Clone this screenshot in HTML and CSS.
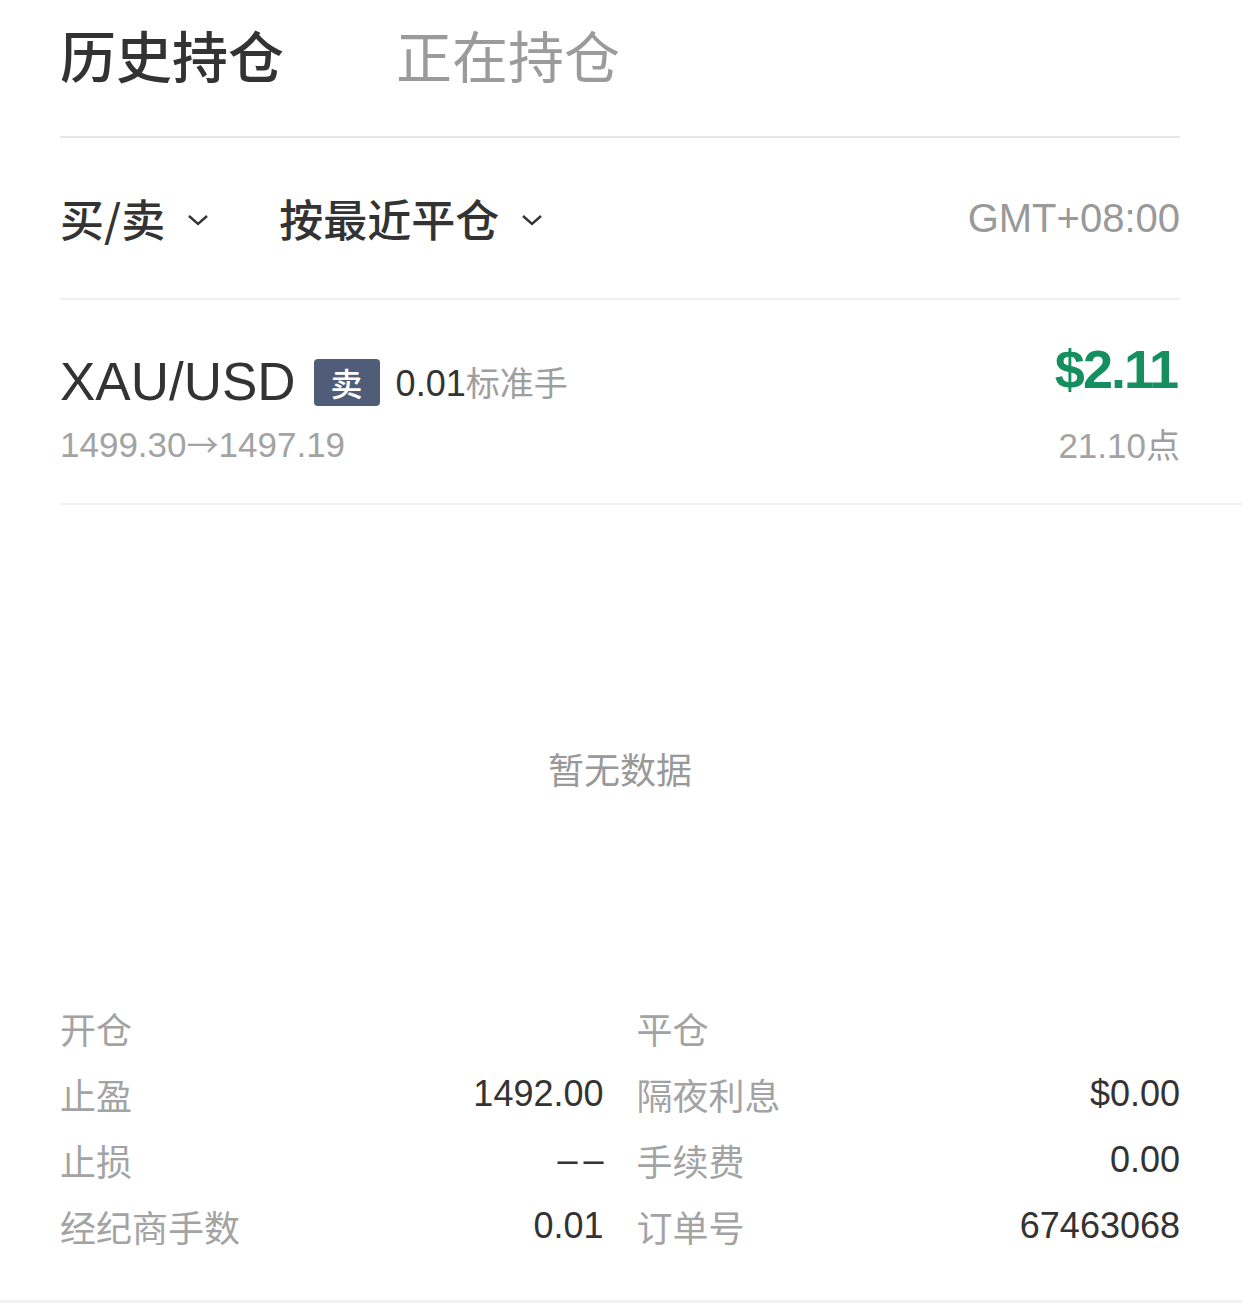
FILE: index.html
```html
<!DOCTYPE html>
<html lang="zh-CN">
<head>
    <meta charset="UTF-8">
    <meta name="viewport" content="width=device-width, initial-scale=1.0">
    <title>历史持仓</title>
    <link rel="stylesheet" href="styles.css">
</head>
<body>
    <div class="page">
        <div class="tabs">
            <div class="tab active">历史持仓</div>
            <div class="tab">正在持仓</div>
        </div>

        <div class="filters">
            <div class="filter">买/卖
                <svg class="chevron" viewBox="0 0 22 12"><polyline points="2,2 11,10 20,2"></polyline></svg>
            </div>
            <div class="filter">按最近平仓
                <svg class="chevron" viewBox="0 0 22 12"><polyline points="2,2 11,10 20,2"></polyline></svg>
            </div>
            <div class="timezone">GMT+08:00</div>
        </div>

        <div class="trade">
            <div class="trade-line">
                <div class="trade-left">
                    <span class="symbol">XAU/USD</span>
                    <span class="badge">卖</span>
                    <span class="lots">0.01<span class="unit">标准手</span></span>
                </div>
                <div class="profit">$2.11</div>
            </div>
            <div class="trade-line sub">
                <div class="prices">1499.30<span class="arrow">→</span>1497.19</div>
                <div class="points">21.10<span class="unit">点</span></div>
            </div>
        </div>

        <div class="empty">暂无数据</div>

        <div class="details">
            <div class="detail"><span class="label">开仓</span><span class="value"></span></div>
            <div class="detail"><span class="label">平仓</span><span class="value"></span></div>
            <div class="detail"><span class="label">止盈</span><span class="value">1492.00</span></div>
            <div class="detail"><span class="label">隔夜利息</span><span class="value">$0.00</span></div>
            <div class="detail"><span class="label">止损</span><span class="value dash">––</span></div>
            <div class="detail"><span class="label">手续费</span><span class="value">0.00</span></div>
            <div class="detail"><span class="label">经纪商手数</span><span class="value">0.01</span></div>
            <div class="detail"><span class="label">订单号</span><span class="value">67463068</span></div>
        </div>
    </div>
    <div class="bottom-line"></div>
</body>
</html>
```

FILE: styles.css
```css
body {
    margin: 0;
    background-color: #fff;
    color: #333;
    font-family: 'Liberation Sans', 'Noto Sans CJK SC', sans-serif;
}

.page {
    padding: 0 62px 0 60px;
}

/* tabs */
.tabs {
    display: flex;
    gap: 112px;
    padding: 16px 0 44px;
    border-bottom: 2px solid #e6e6e6;
}

.tab {
    font-size: 56px;
    line-height: 76px;
    color: #9b9b9b;
    font-family: 'Noto Sans CJK SC', sans-serif;
}

.tab.active {
    color: #333;
    font-weight: 500;
}

/* filters */
.filters {
    display: flex;
    align-items: center;
    height: 160px;
    border-bottom: 2px solid #f0f0f0;
}

.filter {
    display: flex;
    align-items: center;
    font-size: 44px;
    font-weight: 500;
    font-family: 'Noto Sans CJK SC', sans-serif;
    color: #333;
    margin-right: 70px;
}

.chevron {
    width: 22px;
    height: 12px;
    margin-left: 22px;
    margin-top: 4px;
    fill: none;
    stroke: #333;
    stroke-width: 2.4;
}

.timezone {
    margin-left: auto;
    font-size: 40px;
    color: #999;
}

/* trade row */
.trade {
    margin-right: -62px;
    padding: 50px 62px 29px 0;
    border-bottom: 2px solid #f3f3f3;
}

.trade-line {
    display: flex;
    align-items: center;
    justify-content: space-between;
    height: 62px;
}

.trade-left {
    display: flex;
    align-items: center;
}

.symbol {
    font-size: 53px;
    color: #333;
}

.badge {
    display: inline-block;
    width: 66px;
    height: 47px;
    line-height: 47px;
    margin-left: 18px;
    margin-top: 2px;
    border-radius: 4px;
    background-color: #4f5d79;
    color: #fff;
    text-align: center;
    font-size: 32px;
    font-weight: 500;
    font-family: 'Noto Sans CJK SC', sans-serif;
}

.lots {
    margin-left: 16px;
    font-size: 36px;
    color: #333;
}

.unit {
    color: #9e9e9e;
    font-family: 'Noto Sans CJK SC', sans-serif;
    font-size: 34px;
}

.profit {
    font-size: 54px;
    font-weight: bold;
    letter-spacing: -2px;
    margin-right: 3px;
    color: #168f60;
    margin-top: -24px;
}

.trade-line.sub {
    color: #a3a3a3;
    font-size: 35px;
}

.arrow {
    font-family: 'Noto Sans CJK SC', sans-serif;
    font-size: 32px;
}

/* empty state */
.empty {
    padding: 235px 0 199px;
    line-height: 56px;
    text-align: center;
    font-size: 36px;
    color: #999;
    font-family: 'Noto Sans CJK SC', sans-serif;
}

/* details */
.details {
    display: grid;
    grid-template-columns: 1fr 1fr;
    column-gap: 33px;
    padding-bottom: 41px;
}

.detail {
    display: flex;
    align-items: center;
    justify-content: space-between;
    height: 66px;
    font-size: 36px;
}

.label {
    color: #a3a3a3;
    font-family: 'Noto Sans CJK SC', sans-serif;
}

.value {
    color: #333;
}

.value.dash {
    letter-spacing: 6px;
    margin-right: -6px;
}

.bottom-line {
    height: 3px;
    background-color: #f2f2f2;
}
```
